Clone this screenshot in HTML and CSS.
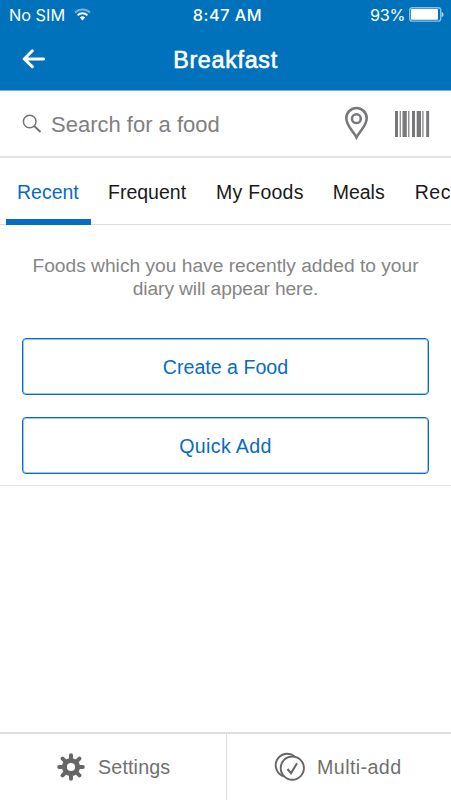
FILE: index.html
```html
<!DOCTYPE html>
<html lang="en">
<head>
<meta charset="utf-8">
<title>Breakfast</title>
<link rel="stylesheet" href="styles.css">
</head>
<body>
<div class="app">
  <header class="header">
    <div class="status">
      <div class="status-left">
        <span>No SIM</span>
        <svg class="wifi" width="17" height="13" viewBox="0 0 17 13" fill="none" stroke="#fff" stroke-width="1.9">
          <path d="M1 4.5a10.8 10.8 0 0 1 15 0" opacity=".45"/>
          <path d="M3.6 7.2a7 7 0 0 1 9.8 0"/>
          <path d="M8.5 12.4 5.8 9.6a3.9 3.9 0 0 1 5.4 0z" fill="#fff" stroke="none"/>
        </svg>
      </div>
      <span class="time">8:47 AM</span>
      <div class="status-right">
        <span>93%</span>
        <svg class="battery" width="35" height="15" viewBox="0 0 35 15">
          <rect x=".7" y=".7" width="31" height="13.4" rx="2.4" fill="none" stroke="#8bc0e6" stroke-width="1.4"/>
          <rect x="2" y="2" width="27" height="10.8" rx=".8" fill="#fff"/>
          <path d="M32.7 5c2.4.6 2.4 4.4 0 5z" fill="#b9daf0"/>
        </svg>
      </div>
    </div>
    <div class="nav">
      <svg class="back" width="24" height="20" viewBox="0 0 24 20" fill="none" stroke="#fff" stroke-width="3" stroke-linecap="round" stroke-linejoin="round"><path d="M10.3 1.8 2.2 10l8.1 7.7M2.5 10h19"/></svg>
      <h1 class="title">Breakfast</h1>
    </div>
  </header>
  <div class="search">
    <svg class="lens" width="20" height="20" viewBox="0 0 20 20" fill="none" stroke="#737373" stroke-width="1.5"><circle cx="7.7" cy="7.5" r="6.3"/><path d="m12.2 12 6.3 6" stroke-width="2"/></svg>
    <span class="placeholder">Search for a food</span>
    <svg class="pin" width="25" height="34" viewBox="0 0 25 34" fill="none" stroke="#78787b"><path d="M12.5 31.3C9.6 25.8 2.3 19.5 2.3 12.2a10.2 10.2 0 0 1 20.4 0c0 7.3-7.3 13.6-10.2 19.1z" stroke-width="2.6"/><circle cx="12.4" cy="12.7" r="4.4" stroke-width="2.5"/></svg>
    <svg class="barcode" width="35" height="26" viewBox="0 0 35 26" fill="#78787b"><path d="M0 0h3v26H0zM4.7 0h1.1v26H4.7zM7.5 0h4.3v26H7.5zM13.2 0h1.2v26h-1.2zM17 0h3v26h-3zM21.7 0h4.3v26h-4.3zM27.3 0h1.2v26h-1.2zM31.2 0h2.9v26h-2.9z"/></svg>
  </div>
  <nav class="tabs">
    <span class="tab active">Recent</span>
    <span class="tab frequent">Frequent</span>
    <span class="tab foods">My Foods</span>
    <span class="tab meals">Meals</span>
    <span class="tab recipes">Recipes</span>
  </nav>
  <main class="content">
    <p class="empty">Foods which you have recently added to your<br><span class="line">diary will appear here.</span></p>
    <button class="button create">Create a Food</button>
    <button class="button quick">Quick Add</button>
  </main>
  <footer class="footer">
    <div class="action settings">
      <svg width="28" height="28" viewBox="-14 -14 28 28" fill="none" stroke="#666" stroke-linecap="round"><circle r="6.6" stroke-width="5"/><path d="M0-9v-2.8M0 9v2.8M-9 0h-2.8M9 0h2.8M-6.4-6.4l-2-2M6.4-6.4l2-2M-6.4 6.4l-2 2M6.4 6.4l2 2" stroke-width="4"/></svg>
      <span>Settings</span>
    </div>
    <div class="action multi">
      <svg width="32" height="30" viewBox="0 0 32 30" fill="none" stroke="#666" stroke-width="1.9"><path d="M11.5 24.4A11.5 11.5 0 1 1 21.6 4.4"/><circle cx="19.3" cy="16.1" r="11.6"/><path d="m14.5 17 3.5 4.2 6-10" stroke-width="2.1"/></svg>
      <span>Multi-add</span>
    </div>
  </footer>
</div>
</body>
</html>
```
FILE: styles.css
```css
* { box-sizing: border-box; }
body {
  margin: 0;
  background: #fff;
  font-family: "Liberation Sans", sans-serif;
}
svg { display: block; flex: none; }
.app {
  width: 451px;
  height: 800px;
  display: flex;
  flex-direction: column;
  overflow: hidden;
}
.header {
  height: 91px;
  background: #0072bc;
  border-bottom: 1px solid #8fabc0;
  color: #fff;
}
.status {
  height: 29px;
  display: grid;
  grid-template-columns: 1fr auto 1fr;
  align-items: center;
  padding: 0 7px 0 9px;
  font: 16.3px/30px Inter, sans-serif;
}
.status-left { display: flex; align-items: center; gap: 9px; }
.status-right { display: flex; align-items: center; justify-content: flex-end; gap: 4px; letter-spacing: -.4px; }
.wifi { margin-top: -1px; }
.battery { margin-top: -2px; }
.time { margin-left: 2px; font-weight: 500; letter-spacing: .5px; }
.nav {
  height: 61px;
  display: grid;
  grid-template-columns: 1fr auto 1fr;
  align-items: center;
  padding-left: 22px;
}
.back { margin-top: -2px; }
.title {
  margin: 0 22px 0 0;
  font-size: 23.3px;
  font-weight: 400;
  line-height: 62px;
  letter-spacing: .7px;
  -webkit-text-stroke: .6px #fff;
}
.search {
  height: 67px;
  display: flex;
  align-items: center;
  padding: 0 21px 0 22px;
  border-bottom: 2px solid #e4e4e4;
}
.placeholder { margin-left: 9px; padding-top: 2px; font-size: 22px; color: #808080; }
.pin { margin: -1px 0 0 auto; }
.barcode { margin-left: 26px; }
.tabs {
  height: 67px;
  display: flex;
  padding-left: 6px;
  overflow: hidden;
  box-shadow: inset 0 -1px #dcdcdc;
  font-size: 19.5px;
  line-height: 68px;
  white-space: nowrap;
  color: #1a1a1a;
}
.tab { flex: none; margin-left: 29px; }
.active {
  width: 85px;
  margin: 0 18px 0 0;
  padding-left: 11px;
  border-bottom: 6px solid #066cc4;
  color: #066cc4;
}
.frequent { margin-left: -1px; }
.foods { margin-left: 30px; letter-spacing: .25px; }
.meals { margin-left: 29px; }
.recipes { margin-left: 30px; letter-spacing: .5px; }
.content {
  height: 261px;
  padding: 29px 22px 0;
  border-bottom: 1px solid #e4e4e4;
}
.empty {
  margin: 0;
  font-size: 19.2px;
  line-height: 23px;
  text-align: center;
  color: #858585;
}
.line { letter-spacing: -.1px; }
.button {
  display: block;
  width: 407px;
  height: 57px;
  margin: 22px 0 0;
  padding: 2px 0 0;
  border: 1px solid #066cc4;
  border-radius: 4px;
  background: #fff;
  box-shadow: inset 0 0 0 1px #9cc6ea;
  color: #066cc4;
  font: 19.6px "Liberation Sans", sans-serif;
}
.create { margin-top: 38px; }
.quick { letter-spacing: .35px; }
.footer {
  height: 68px;
  display: flex;
  margin-top: auto;
  border-top: 2px solid #dedede;
  font-size: 19.7px;
  color: #707070;
}
.action { display: flex; align-items: center; }
.settings { width: 227px; padding-left: 57px; gap: 13px; border-right: 1px solid #dcdcdc; letter-spacing: .15px; }
.multi { flex: 1; padding-left: 46px; gap: 12px; letter-spacing: .4px; }
```
